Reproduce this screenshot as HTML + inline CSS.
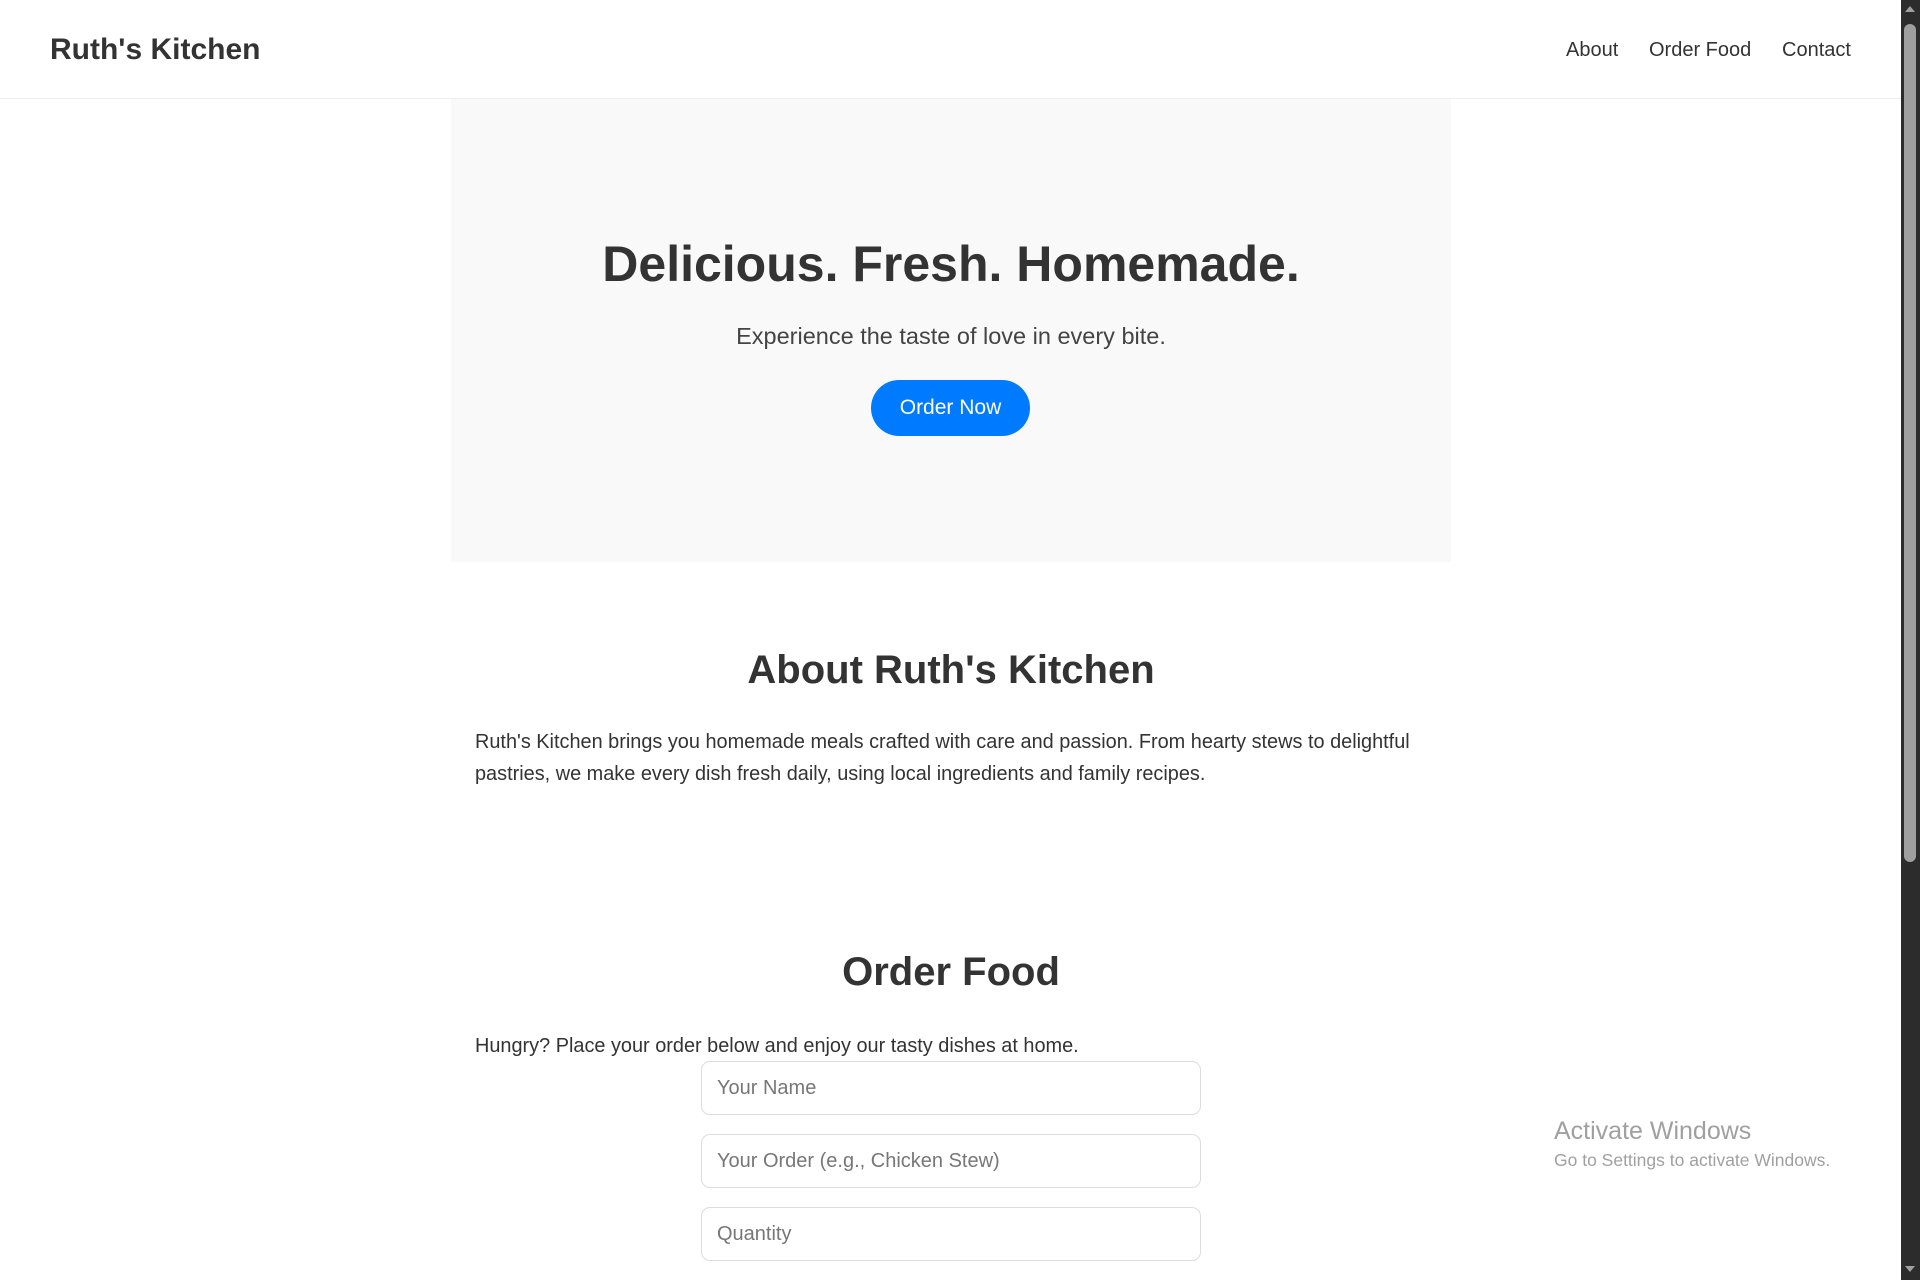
<!DOCTYPE html>
<html><head><meta charset="utf-8"><style>
*{box-sizing:border-box;margin:0;padding:0}
html,body{width:1920px;height:1280px;overflow:hidden;background:#fff;font-family:"Liberation Sans",Arial,sans-serif;color:#333}
.hdr{position:absolute;left:0;top:0;width:1901px;height:99px;border-bottom:1px solid #eee}
.logo{position:absolute;left:50px;top:33px;font-size:30px;font-weight:bold;color:#333}
.nav{position:absolute;top:39px;font-size:20px;color:#333}
.hero{position:absolute;left:451px;top:99px;width:1000px;height:463px;background:#f9f9f9;text-align:center}
.hero h1{position:absolute;left:0;right:0;top:135px;font-size:50px;line-height:60px;font-weight:bold;color:#333}
.c{position:absolute;left:0;right:0;text-align:center}
.btn{position:absolute;left:420px;top:281px;width:159px;height:56px;border-radius:28px;background:#007bff;color:#fff;font-size:21px;line-height:56px;text-align:center}
h2{position:absolute;left:451px;width:1000px;text-align:center;font-size:40px;font-weight:bold;color:#333}
.p{position:absolute;left:475px;width:960px;font-size:19.9px;line-height:32px;color:#333}
.inp{position:absolute;left:701px;width:500px;height:54px;border:1px solid #ddd;border-radius:9px;font-size:20px;color:#777;padding-left:15px;line-height:52px}
.sb{position:absolute;left:1901px;top:0;width:19px;height:1280px;background:#2c2c2c}
.th{position:absolute;left:1904px;top:24px;width:12px;height:838px;background:#9f9f9f;border-radius:6px}
.w1{position:absolute;left:1554px;top:1117px;font-size:25px;color:#a0a0a0}
.w2{position:absolute;left:1554px;top:1150px;font-size:17.5px;color:#a0a0a0}
</style></head><body>
<div class="hdr">
<div class="logo">Ruth's Kitchen</div>
<div class="nav" style="left:1566px">About</div>
<div class="nav" style="left:1649px">Order Food</div>
<div class="nav" style="left:1782px">Contact</div>
</div>
<div class="hero">
<h1>Delicious. Fresh. Homemade.</h1>
<div class="c" style="top:224px;font-size:23.5px;color:#444">Experience the taste of love in every bite.</div>
<div class="btn">Order Now</div>
</div>
<h2 style="top:648px">About Ruth's Kitchen</h2>
<div class="p" style="top:726px">Ruth's Kitchen brings you homemade meals crafted with care and passion. From hearty stews to delightful pastries, we make every dish fresh daily, using local ingredients and family recipes.</div>
<h2 style="top:950px">Order Food</h2>
<div class="p" style="top:1030px">Hungry? Place your order below and enjoy our tasty dishes at home.</div>
<div class="inp" style="top:1061px">Your Name</div>
<div class="inp" style="top:1134px">Your Order (e.g., Chicken Stew)</div>
<div class="inp" style="top:1207px">Quantity</div>
<div class="w1">Activate Windows</div>
<div class="w2">Go to Settings to activate Windows.</div>
<div class="sb"></div>
<div class="th"></div>
<div style="position:absolute;left:1905px;top:6px;width:0;height:0;border-left:5px solid transparent;border-right:5px solid transparent;border-bottom:6px solid #a0a0a0"></div>
<div style="position:absolute;left:1905px;top:1266px;width:0;height:0;border-left:5px solid transparent;border-right:5px solid transparent;border-top:6px solid #a0a0a0"></div>
</body></html>
